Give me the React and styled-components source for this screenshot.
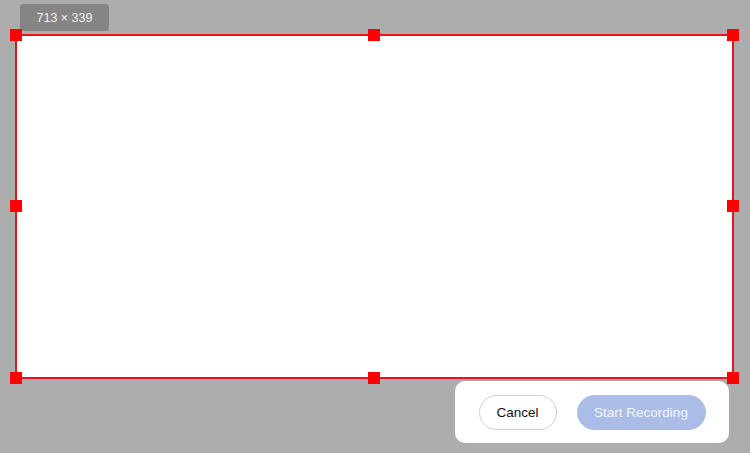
import React from "react";
import styled, { createGlobalStyle } from "styled-components";

const Global = createGlobalStyle`
  html, body { margin: 0; padding: 0; }
  body { font-family: "Liberation Sans", Arial, sans-serif; }
`;

const Screen = styled.div`
  position: relative;
  width: 750px;
  height: 453px;
  background: #adadad;
  overflow: hidden;
`;

const SizeLabel = styled.div`
  position: absolute;
  left: 20px;
  top: 4px;
  width: 89px;
  height: 27px;
  border-radius: 4px;
  background: #858585;
  color: #f2f2f2;
  font-size: 12.5px;
  display: flex;
  align-items: center;
  justify-content: center;
`;

const Selection = styled.div`
  position: absolute;
  left: 15px;
  top: 34px;
  width: 715px;
  height: 341px;
  border: 2px solid #e8141a;
  background: #ffffff;
`;

const Handle = styled.div`
  position: absolute;
  width: 12px;
  height: 12px;
  background: #ff0000;
  left: ${(p) => p.$x};
  top: ${(p) => p.$y};
  transform: translate(-50%, -50%);
`;

const Toolbar = styled.div`
  position: absolute;
  left: 455px;
  top: 381px;
  width: 274px;
  height: 62px;
  background: #ffffff;
  border-radius: 10px;
  display: flex;
  align-items: center;
  justify-content: center;
  gap: 20px;
  box-sizing: border-box;
`;

const PillButton = styled.button`
  height: 35px;
  border-radius: 18px;
  font-family: "Liberation Sans", Arial, sans-serif;
  font-size: 13.5px;
  padding: 0;
  cursor: pointer;
  width: ${(p) => p.$w}px;
  border: 1px solid ${(p) => (p.$primary ? "#abbde6" : "#cfcfcf")};
  background: ${(p) => (p.$primary ? "#abbde6" : "#ffffff")};
  color: ${(p) => (p.$primary ? "#f4f6fc" : "#111111")};
`;

const handles = [
  ["-1px", "-1px"],
  ["calc(50% - 1px)", "-1px"],
  ["calc(100% + 1px)", "-1px"],
  ["-1px", "calc(50% - 1px)"],
  ["calc(100% + 1px)", "calc(50% - 1px)"],
  ["-1px", "calc(100% + 1px)"],
  ["calc(50% - 1px)", "calc(100% + 1px)"],
  ["calc(100% + 1px)", "calc(100% + 1px)"],
];

export default function App() {
  return (
    <>
      <Global />
      <Screen>
        <SizeLabel>713 × 339</SizeLabel>
        <Selection>
          {handles.map(([x, y], i) => (
            <Handle key={i} $x={x} $y={y} />
          ))}
        </Selection>
        <Toolbar>
          <PillButton $w={78}>Cancel</PillButton>
          <PillButton $w={129} $primary>
            Start Recording
          </PillButton>
        </Toolbar>
      </Screen>
    </>
  );
}
